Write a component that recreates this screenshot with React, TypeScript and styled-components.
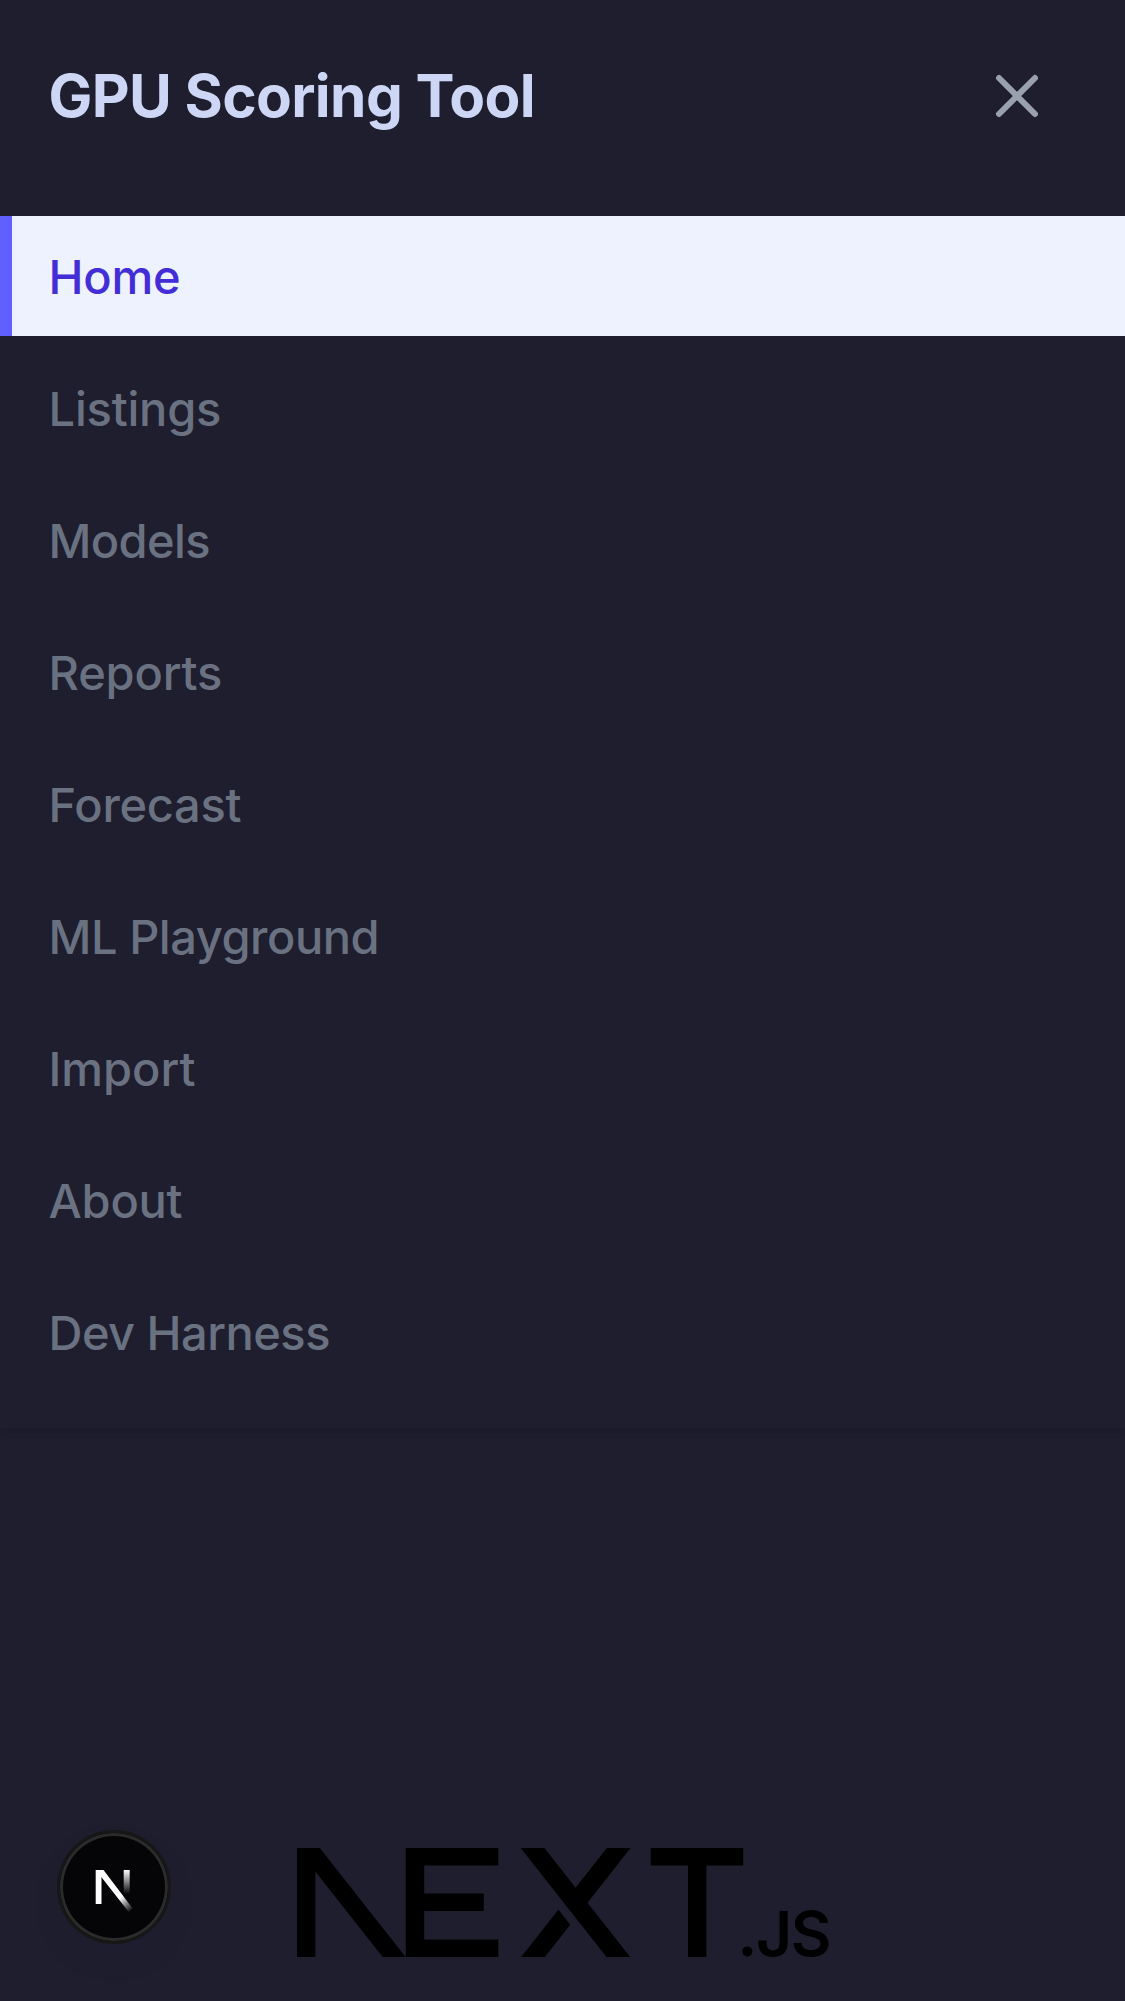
import React from "react";
import styled, { createGlobalStyle } from "styled-components";

const Global = createGlobalStyle`
  * { box-sizing: border-box; }
  body { margin: 0; background: #1e1e2e; font-family: Inter, "Liberation Sans", sans-serif; }
`;

const Page = styled.main`
  min-height: 2001px;
  display: flex;
  flex-direction: column;
  justify-content: space-between;
  overflow: hidden;
`;

const Menu = styled.header`
  display: flex;
  flex-direction: column;
  background: #1e1e2e;
  box-shadow: 0 3px 9px rgba(0, 0, 0, 0.1), 0 3px 6px -3px rgba(0, 0, 0, 0.1);
`;

const TopBar = styled.div`
  height: 192px;
  padding: 0 72px 0 48.5px;
  display: flex;
  align-items: center;
  justify-content: space-between;
`;

const Title = styled.h1`
  margin: 0;
  color: #cdd6f4;
  font-size: 58.5px;
  line-height: 84px;
  font-weight: 700;
  letter-spacing: -0.62px;
  white-space: nowrap;
`;

const CloseButton = styled.button`
  display: flex;
  padding: 0;
  border: 0;
  background: none;
  color: #99a1af;
`;

const Nav = styled.nav`
  display: flex;
  flex-direction: column;
  gap: 12px;
  padding: 24px 0 36px;
`;

const NavLink = styled.a<{ $active?: boolean; $tracking: number }>`
  height: 120px;
  padding: 1px 0 0 36.5px;
  display: flex;
  align-items: center;
  border-left: 12px solid ${(p) => (p.$active ? "#615fff" : "transparent")};
  background: ${(p) => (p.$active ? "#eef2ff" : "transparent")};
  color: ${(p) => (p.$active ? "#432dd7" : "#6a7282")};
  font-size: 47px;
  line-height: 72px;
  font-weight: 500;
  letter-spacing: ${(p) => p.$tracking}px;
  white-space: nowrap;
`;

const Footer = styled.footer`
  display: flex;
  align-items: flex-end;
  padding: 0 0 44px 57px;
`;

const DevBadge = styled.button`
  width: 114px;
  height: 114px;
  margin: 0 126px 13px 0;
  padding: 0;
  display: flex;
  align-items: center;
  justify-content: center;
  border: 3px solid #171717;
  border-radius: 50%;
  background: #050507;
  box-shadow: inset 0 0 0 3px #2b2b2c, 0 16px 32px -8px rgba(30, 30, 60, 0.24);
`;

const Mark = styled.svg`
  display: block;
`;

const Wordmark = styled.svg`
  display: block;
  flex: none;
`;

const LogoSlot = styled.div`
  margin-bottom: -16px;
`;

const links = [
  { label: "Home", tracking: -0.25 },
  { label: "Listings", tracking: -0.2 },
  { label: "Models", tracking: -0.6 },
  { label: "Reports", tracking: -0.15 },
  { label: "Forecast", tracking: -0.25 },
  { label: "ML Playground", tracking: -0.45 },
  { label: "Import", tracking: 0 },
  { label: "About", tracking: -0.25 },
  { label: "Dev Harness", tracking: -0.52 },
];

function CloseIcon() {
  return (
    <svg width="72" height="72" viewBox="0 0 24 24" fill="none" stroke="currentColor" strokeWidth="2" strokeLinecap="round">
      <path d="M6 18 18 6M6 6l12 12" />
    </svg>
  );
}

function NextMark() {
  return (
    <Mark width="40" height="52" viewBox="0 0 40 52">
      <defs>
        <linearGradient id="diagonal" gradientUnits="userSpaceOnUse" x1="25" y1="29" x2="36" y2="43">
          <stop stopColor="#fff" />
          <stop offset="1" stopColor="#fff" stopOpacity="0" />
        </linearGradient>
        <linearGradient id="stem" gradientUnits="userSpaceOnUse" x1="0" y1="1" x2="0" y2="25">
          <stop stopColor="#fff" />
          <stop offset="1" stopColor="#fff" stopOpacity="0" />
        </linearGradient>
      </defs>
      <g transform="translate(.7 8)">
        <rect x="1" y="1" width="5.8" height="34" fill="#fff" />
        <rect x="29" y="1" width="6" height="24" fill="url(#stem)" />
        <path d="M1 1h7.8L38 39.5 34 43 6.6 8z" fill="url(#diagonal)" />
      </g>
    </Mark>
  );
}

function NextLogo() {
  return (
    <Wordmark width="550" height="125" viewBox="0 0 550 125" role="img" aria-label="Next.js">
      <svg width="460" height="109" viewBox="0 0 460 109">
        <g stroke="#000" strokeWidth="18.4">
          <path d="M9.2 0V109M118 0V109M400.2 0V109" />
          <path strokeWidth="17.5" d="M109 8.75H201.3M118 54.2H186.8M109 100.2H201.3M353.8 8.75H446.2" />
          <path d="M4 -9.3 104.8 118.7" strokeWidth="18" />
          <path d="M329 -9.3 228.4 118.7" strokeWidth="18.6" />
          <path d="M221.6 0 307.6 109" stroke="#1e1e2e" strokeWidth="14" />
          <path d="M228.2 -9.3 329 118.7" strokeWidth="18.6" />
        </g>
      </svg>
      <circle cx="450.3" cy="103.4" r="5" />
      <text x="459" y="108.2" fontFamily="Inter" fontSize="62.5" fontWeight="600" textLength="75.5" fill="#000">JS</text>
    </Wordmark>
  );
}

export default function App() {
  return (
    <Page>
      <Global />
      <Menu>
        <TopBar>
          <Title>GPU Scoring Tool</Title>
          <CloseButton aria-label="Close menu"><CloseIcon /></CloseButton>
        </TopBar>
        <Nav>
          {links.map((link, i) => (
            <NavLink key={link.label} $active={i === 0} $tracking={link.tracking}>{link.label}</NavLink>
          ))}
        </Nav>
      </Menu>
      <Footer>
        <DevBadge aria-label="Open developer tools"><NextMark /></DevBadge>
        <LogoSlot><NextLogo /></LogoSlot>
      </Footer>
    </Page>
  );
}
